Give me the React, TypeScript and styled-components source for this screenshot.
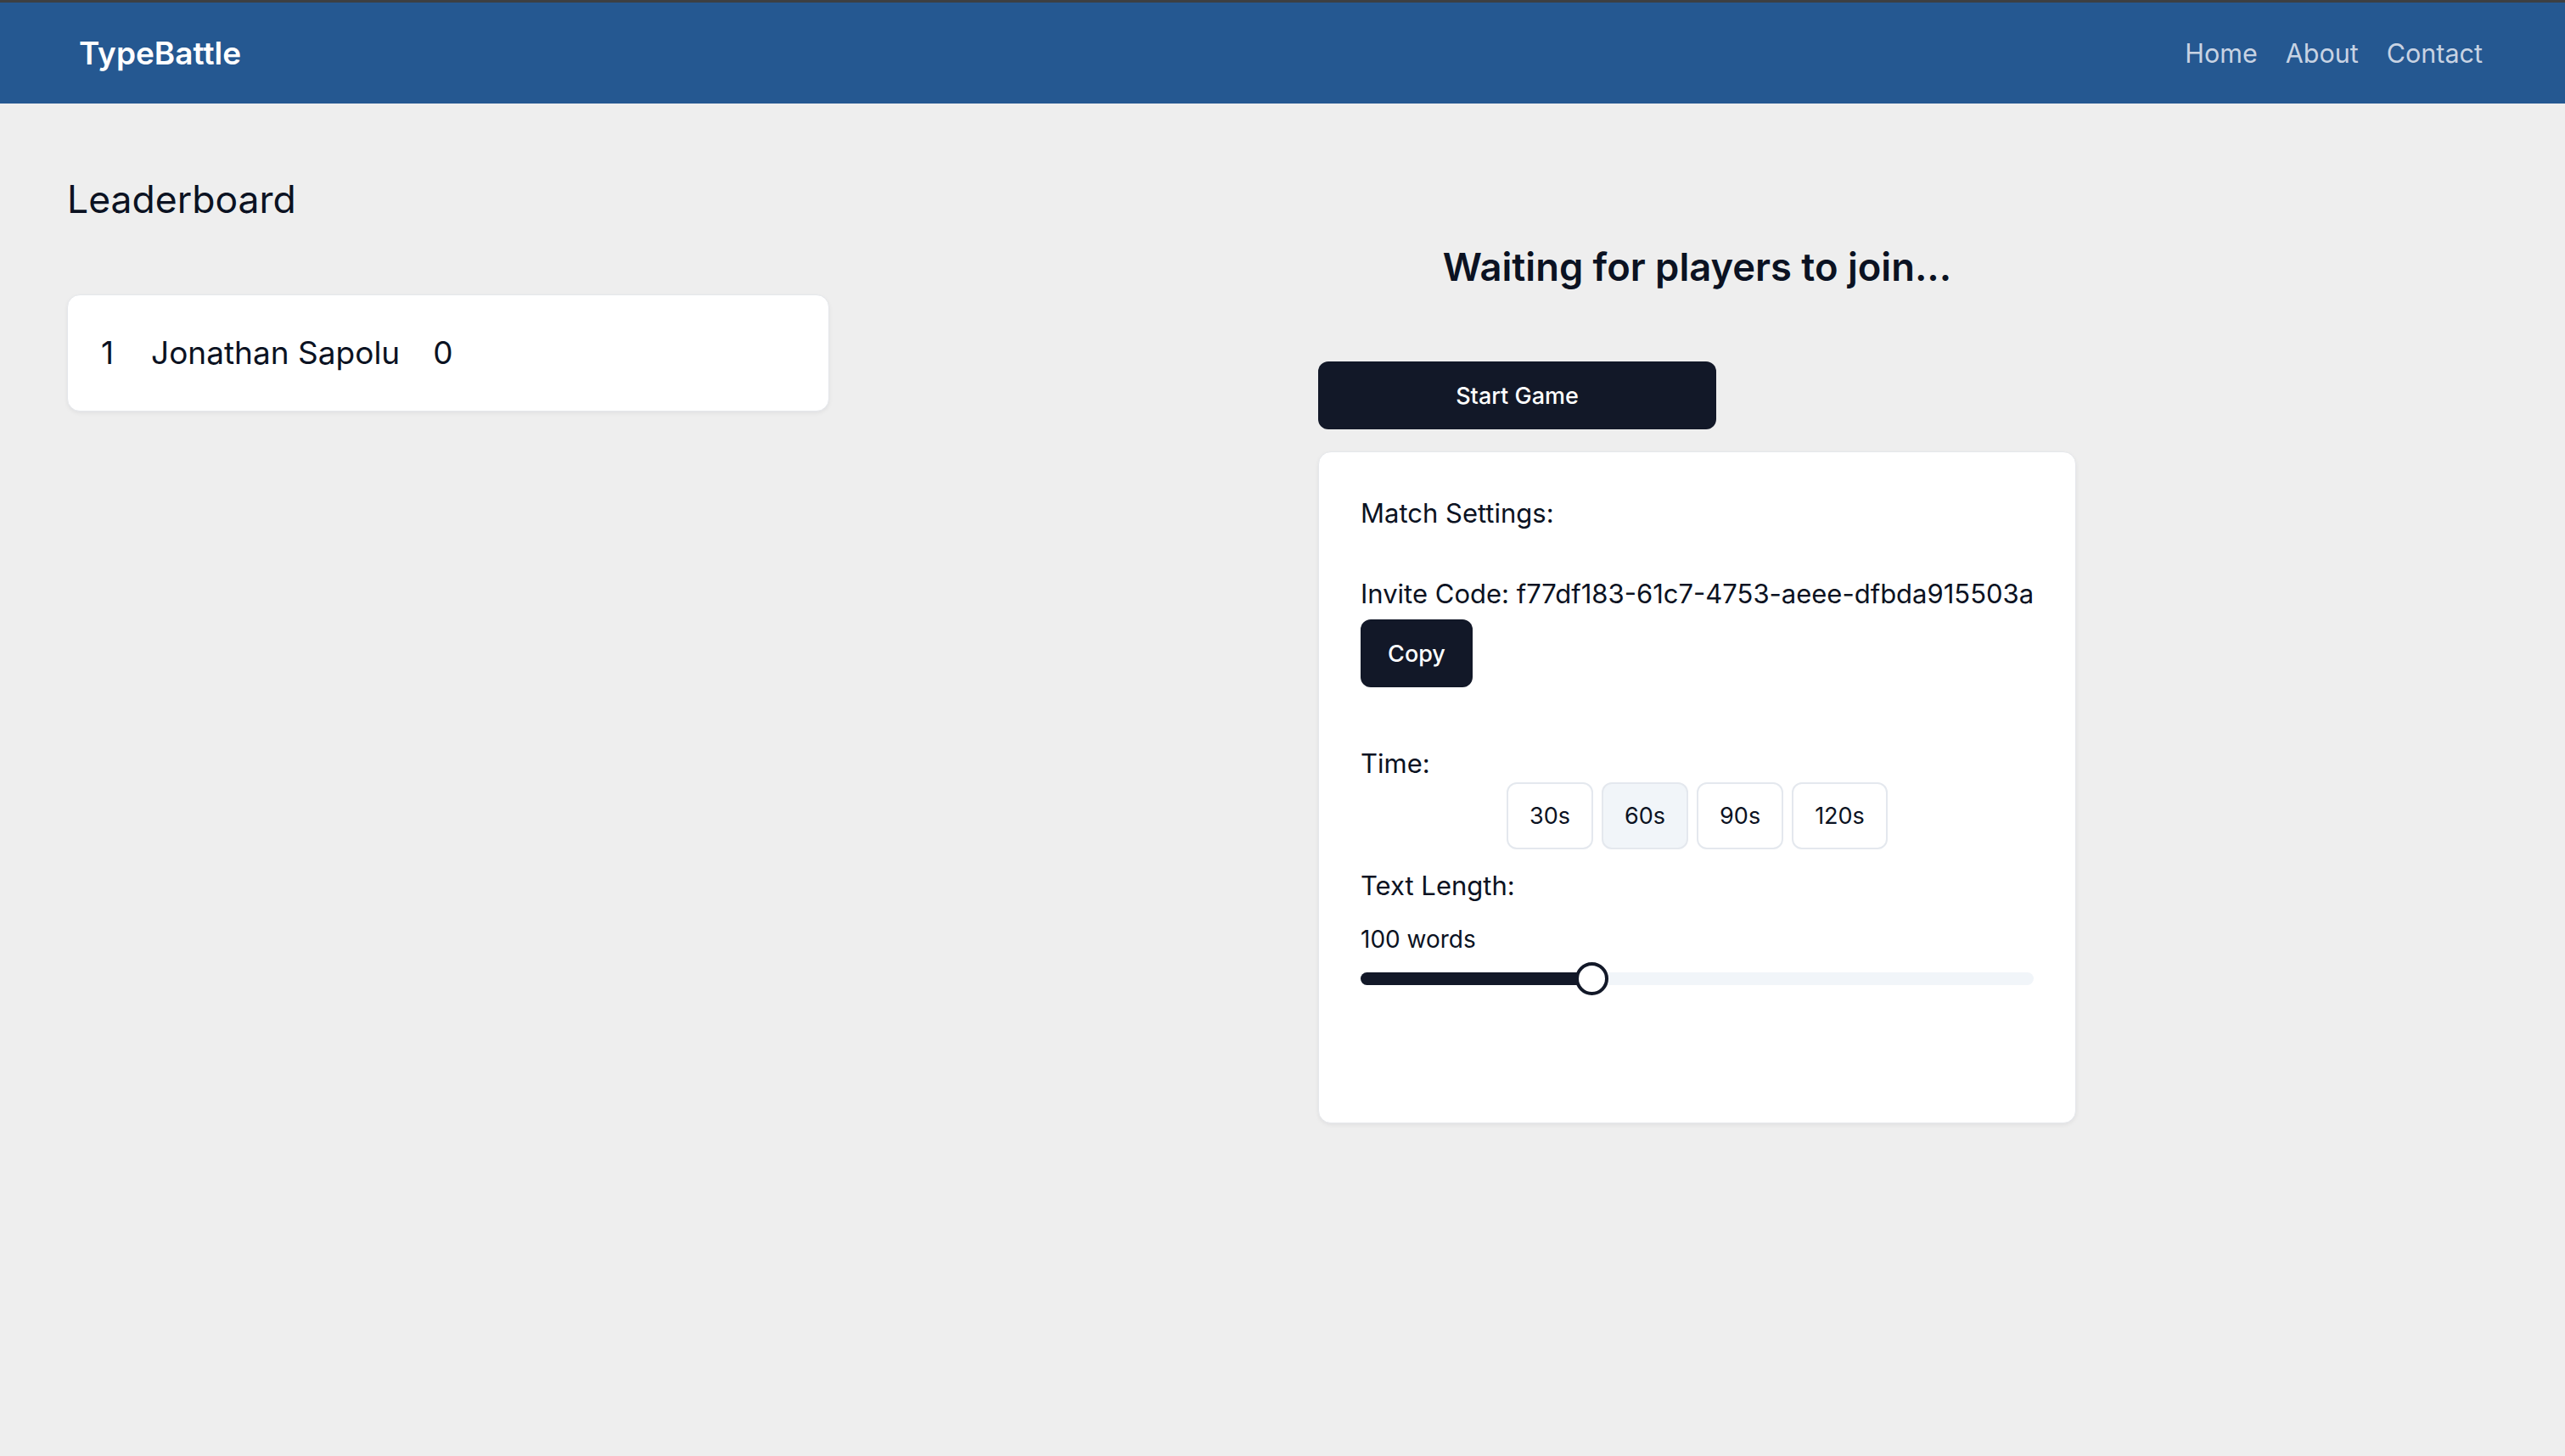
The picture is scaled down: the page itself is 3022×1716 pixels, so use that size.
import React from "react";
import styled, { createGlobalStyle } from "styled-components";

const Global = createGlobalStyle`
  html, body { margin: 0; padding: 0; background: #eeeeee; }
  body { font-family: Inter, "Noto Sans", sans-serif; color: #0b1222; }
  * { box-sizing: border-box; }
`;

const Page = styled.div`
  min-height: 1716px;
  background: #eeeeee;
`;

const Nav = styled.nav`
  height: 122px;
  border-top: 3px solid #3d3f42;
  background: #255891;
  display: flex;
  align-items: center;
  justify-content: space-between;
  padding: 0 97px 0 93px;
`;

const Brand = styled.div`
  color: #ffffff;
  font-size: 37px;
  font-weight: 600;
  line-height: 46px;
`;

const Links = styled.div`
  display: flex;
  gap: 33px;
`;

const NavLink = styled.a`
  color: #c8d3e3;
  font-size: 30.5px;
  line-height: 40px;
  text-decoration: none;
`;

const Main = styled.main`
  display: flex;
  padding-left: 79px;
`;

const LeftCol = styled.section`
  width: 898px;
  flex: none;
`;

const Title = styled.h2`
  margin: 85px 0 0;
  font-size: 44.5px;
  font-weight: 400;
  line-height: 56px;
  color: #0b1222;
`;

const Card = styled.div`
  background: #ffffff;
  border: 1px solid #e5e7eb;
  border-radius: 15px;
  box-shadow: 0 2px 5px rgba(15, 23, 42, 0.06);
`;

const LeaderCard = styled(Card)`
  margin-top: 84px;
  padding: 43px 39px;
`;

const Row = styled.div`
  display: flex;
  gap: 39px;
  font-size: 37px;
  line-height: 50px;
`;

const Rank = styled.span`
  margin-right: 5px;
`;

const RightCol = styled.section`
  flex: 1;
  display: flex;
  justify-content: center;
`;

const Inner = styled.div`
  width: 893px;
  display: flex;
  flex-direction: column;
  align-items: flex-start;
`;

const Waiting = styled.h1`
  align-self: stretch;
  text-align: center;
  margin: 165px 0 0;
  font-size: 45.3px;
  font-weight: 600;
  line-height: 56px;
  color: #0b1222;
`;

const DarkButton = styled.button<{ $w: number; $mt: number }>`
  width: ${(p) => p.$w}px;
  height: 80px;
  margin-top: ${(p) => p.$mt}px;
  background: #121828;
  color: #ffffff;
  border: none;
  border-radius: 12px;
  font-family: Inter, sans-serif;
  font-size: 27px;
  font-weight: 500;
  cursor: pointer;
`;

const SettingsCard = styled(Card)`
  align-self: stretch;
  margin-top: 26px;
  height: 792px;
  padding: 49px 49px;
  display: flex;
  flex-direction: column;
`;

const Label = styled.div<{ $mt?: number }>`
  font-size: 31px;
  line-height: 45px;
  margin-top: ${(p) => p.$mt ?? 0}px;
  color: #0b1222;
  white-space: nowrap;
`;

const Small = styled.div<{ $mt?: number }>`
  font-size: 28px;
  line-height: 40px;
  margin-top: ${(p) => p.$mt ?? 0}px;
  font-weight: 400;
`;

const TimeRow = styled.div`
  display: flex;
  justify-content: center;
  gap: 10px;
`;

const TimeButton = styled.button<{ $active?: boolean }>`
  height: 79px;
  padding: 0 25px;
  border: 2px solid #e4e8ee;
  border-radius: 12px;
  background: ${(p) => (p.$active ? "#f1f5f9" : "#ffffff")};
  color: #0b1222;
  font-family: Inter, sans-serif;
  font-size: 27px;
  font-weight: 400;
`;

const SliderWrap = styled.div`
  position: relative;
  margin-top: 7px;
  height: 39px;
  display: flex;
  align-items: center;
`;

const Track = styled.div`
  width: 100%;
  height: 15px;
  border-radius: 8px;
  background: #f1f5f9;
  overflow: hidden;
`;

const Range = styled.div`
  height: 100%;
  background: #121828;
`;

const Thumb = styled.div`
  position: absolute;
  top: 0;
  width: 39px;
  height: 39px;
  margin-left: -19px;
  border-radius: 50%;
  border: 4px solid #121828;
  background: #ffffff;
`;

const times = ["30s", "60s", "90s", "120s"];

export default function App() {
  const pct = 34.3;
  return (
    <Page>
      <Global />
      <Nav>
        <Brand>TypeBattle</Brand>
        <Links>
          <NavLink href="#">Home</NavLink>
          <NavLink href="#">About</NavLink>
          <NavLink href="#">Contact</NavLink>
        </Links>
      </Nav>
      <Main>
        <LeftCol>
          <Title>Leaderboard</Title>
          <LeaderCard>
            <Row>
              <Rank>1</Rank>
              <span>Jonathan Sapolu</span>
              <span>0</span>
            </Row>
          </LeaderCard>
        </LeftCol>
        <RightCol>
          <Inner>
            <Waiting>Waiting for players to join...</Waiting>
            <DarkButton $w={469} $mt={83}>Start Game</DarkButton>
            <SettingsCard>
              <Label>Match Settings:</Label>
              <Label $mt={50}>Invite Code: f77df183-61c7-4753-aeee-dfbda915503a</Label>
              <DarkButton $w={132} $mt={8}>Copy</DarkButton>
              <Label $mt={67}>Time:</Label>
              <TimeRow>
                {times.map((t) => (
                  <TimeButton key={t} $active={t === "60s"}>
                    {t}
                  </TimeButton>
                ))}
              </TimeRow>
              <Label $mt={20}>Text Length:</Label>
              <Small $mt={21}>100 words</Small>
              <SliderWrap>
                <Track>
                  <Range style={{ width: `${pct}%` }} />
                </Track>
                <Thumb style={{ left: `${pct}%` }} />
              </SliderWrap>
            </SettingsCard>
          </Inner>
        </RightCol>
      </Main>
    </Page>
  );
}
